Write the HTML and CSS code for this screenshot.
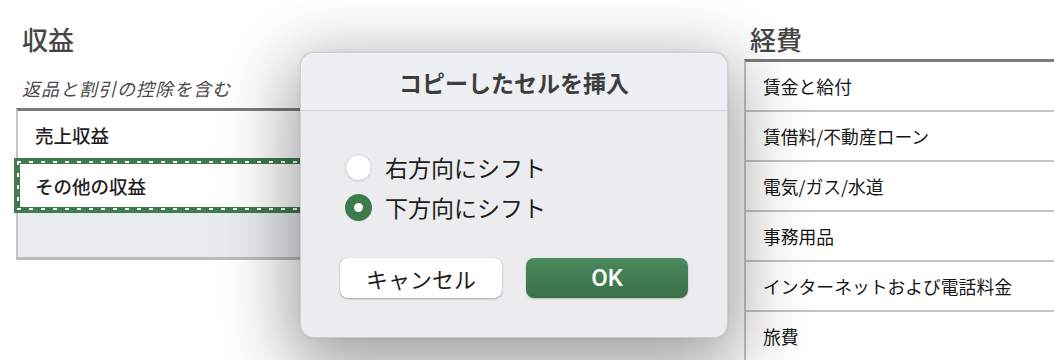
FILE: index.html
```html
<!DOCTYPE html>
<html lang="ja">
<head>
<meta charset="utf-8">
<link rel="stylesheet" href="styles.css">
</head>
<body>
<div class="page">
  <section class="col col-left">
    <h2 class="heading">収益</h2>
    <p class="subtitle">返品と割引の控除を含む</p>
    <div class="table table-left">
      <div class="row row-a">売上収益</div>
      <div class="row row-sel">その他の収益</div>
      <div class="row row-empty"></div>
    </div>
  </section>
  <section class="col col-right">
    <h2 class="heading">経費</h2>
    <div class="table table-right">
      <div class="row row-r">賃金と給付</div>
      <div class="row row-r">賃借料/不動産ローン</div>
      <div class="row row-r">電気/ガス/水道</div>
      <div class="row row-r">事務用品</div>
      <div class="row row-r">インターネットおよび電話料金</div>
      <div class="row row-r">旅費</div>
    </div>
  </section>
</div>

<div class="dialog">
  <div class="dialog-title">コピーしたセルを挿入</div>
  <div class="dialog-body">
    <div class="options">
      <label class="option"><span class="radio"></span><span>右方向にシフト</span></label>
      <label class="option"><span class="radio checked"></span><span>下方向にシフト</span></label>
    </div>
    <div class="buttons">
      <button class="btn btn-cancel">キャンセル</button>
      <button class="btn btn-ok">OK</button>
    </div>
  </div>
</div>
</body>
</html>
```

FILE: styles.css
```css
html, body {
  margin: 0;
  padding: 0;
  background: #ffffff;
  width: 1054px;
  height: 360px;
  overflow: hidden;
}
body {
  font-family: "Noto Sans CJK JP", "Noto Sans", sans-serif;
  color: #222;
}
.page {
  display: flex;
  align-items: flex-start;
  padding-left: 16px;
}
.col-left {
  width: 690px;
  flex: none;
}
.col-right {
  flex: 1;
  margin-left: 38px;
}
.heading {
  margin: 24px 0 0 6px;
  font-size: 26px;
  line-height: 30px;
  font-weight: 500;
  color: #464646;
}
.subtitle {
  margin: 22px 0 0 6px;
  font-size: 18px;
  line-height: 24px;
  font-style: italic;
  font-weight: 400;
  color: #4a4a4a;
  letter-spacing: 1px;
}
.table {
  border-top: 3px solid #7b7b7b;
  border-left: 2px solid #c6c6c6;
}
.table-left {
  margin-top: 8px;
  border-bottom: 3px solid #bcbcbc;
}
.table-right {
  margin-top: 5px;
}
.row {
  display: flex;
  align-items: center;
  padding-left: 17px;
  font-size: 18.5px;
  font-weight: 500;
  color: #1e1e1e;
  box-sizing: border-box;
}
.row-a {
  height: 47px;
  background: #fff;
}
.row-sel {
  position: relative;
  height: 55px;
  margin-left: -4px;
  padding-left: 15px;
  border: 6px solid #3e7b4d;
  border-right: none;
  background: #fff;
}
.row-sel::before {
  content: "";
  position: absolute;
  top: -3px;
  left: -3px;
  right: 0;
  bottom: -3px;
  pointer-events: none;
  background:
    repeating-linear-gradient(90deg, #fff 0 4px, transparent 4px 12px) left top / 100% 2px no-repeat,
    repeating-linear-gradient(90deg, #fff 0 4px, transparent 4px 12px) left bottom / 100% 2px no-repeat,
    repeating-linear-gradient(180deg, #fff 0 4px, transparent 4px 12px) left top / 2px 100% no-repeat;
}
.row-empty {
  height: 44px;
  background: #e8ebf0;
}
.row-r {
  height: 50px;
  font-size: 17.8px;
  font-weight: 400;
  color: #161616;
  border-bottom: 2px solid #c4c4c4;
  background: #fff;
}

/* dialog overlay */
.dialog {
  position: absolute;
  left: 300px;
  top: 52px;
  width: 428px;
  height: 286px;
  box-sizing: border-box;
  border-radius: 14px;
  background: #ececef;
  border: 1px solid rgba(0,0,0,0.12);
  box-shadow: 0 20px 70px 10px rgba(0,0,0,0.38), 0 0 3px rgba(0,0,0,0.1);
  display: flex;
  flex-direction: column;
}
.dialog-title {
  height: 57px;
  display: flex;
  align-items: center;
  justify-content: center;
  font-size: 23px;
  font-weight: 700;
  color: #3d3d3d;
  border-bottom: 1px solid #d2d2d5;
  background: #eeeff2;
  border-radius: 14px 14px 0 0;
}
.dialog-body {
  padding: 43px 0 0 44px;
}
.options {
  display: flex;
  flex-direction: column;
  gap: 13px;
}
.option {
  display: flex;
  align-items: center;
  gap: 13px;
  font-size: 23px;
  line-height: 27px;
  font-weight: 400;
  color: #1e1e1e;
}
.radio {
  width: 27px;
  height: 27px;
  box-sizing: border-box;
  border-radius: 50%;
  background: #fff;
  border: 1px solid #cfcfd2;
  box-shadow: 0 1px 1px rgba(0,0,0,0.06);
  flex: none;
}
.radio.checked {
  border: 9.5px solid #3d7b4d;
  background: #fff;
}
.buttons {
  display: flex;
  gap: 24px;
  margin-top: 37px;
  margin-left: -5px;
}
.btn {
  width: 162px;
  height: 40px;
  border-radius: 8px;
  border: none;
  font-family: "Noto Sans CJK JP", "Noto Sans", sans-serif;
  font-size: 22px;
  font-weight: 400;
  padding: 0;
  display: flex;
  align-items: center;
  justify-content: center;
}
.btn-cancel {
  background: #fff;
  color: #1e1e1e;
  box-shadow: 0 1px 2px rgba(0,0,0,0.3), 0 0 1px rgba(0,0,0,0.2);
}
.btn-ok {
  background: linear-gradient(#4a8a5d, #3a7049);
  color: #fff;
  font-family: Roboto, "Liberation Sans", sans-serif;
  font-size: 24px;
  font-weight: 500;
  box-shadow: 0 1px 2px rgba(0,0,0,0.2);
}
```
